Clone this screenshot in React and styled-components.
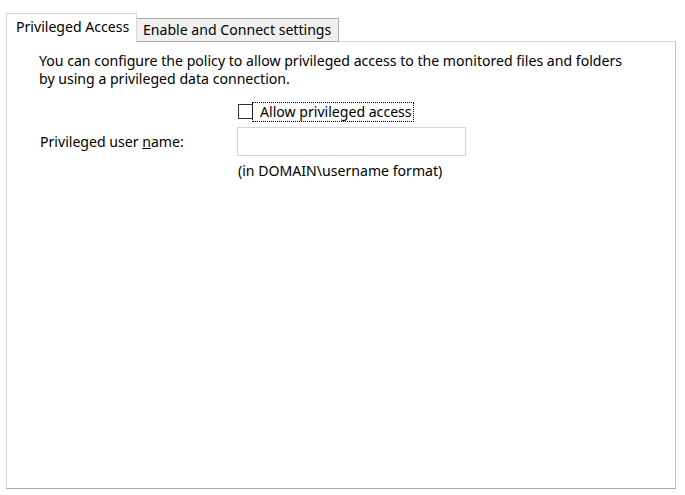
import React from "react";
import styled, { createGlobalStyle } from "styled-components";

const Global = createGlobalStyle`
  html, body { margin: 0; padding: 0; background: #ffffff; }
  body {
    font-family: "Noto Sans", "Open Sans", sans-serif;
    font-size: 14.1px;
    color: #000000;
  }
`;

const Root = styled.div`
  width: 685px;
  height: 495px;
  box-sizing: border-box;
  padding: 13px 9px 6px 6px;
  display: flex;
  flex-direction: column;
`;

const TabStrip = styled.div`
  display: flex;
  align-items: flex-end;
  height: 29px;
  position: relative;
  z-index: 1;
  margin-bottom: -1px;
`;

const Tab = styled.div`
  box-sizing: border-box;
  border: 1px solid ${(p) => (p.$active ? "#d9d9d9" : "#adadad")};
  border-bottom: ${(p) => (p.$active ? "none" : "1px solid #adadad")};
  ${(p) => (p.$active ? "" : "border-left: none;")}
  background: ${(p) => (p.$active ? "#ffffff" : "#f0f0f0")};
  height: ${(p) => (p.$active ? "29px" : "24px")};
  width: ${(p) => p.$w}px;
  padding: ${(p) => (p.$active ? "3px 0 0 9px" : "1px 0 0 6px")};
  white-space: nowrap;
  line-height: 20px;
`;

const Panel = styled.div`
  flex: 1;
  box-sizing: border-box;
  border: 1px solid #d9d9d9;
  border-right-color: #c4c4c4;
  border-bottom-color: #a8a8a8;
  background: #ffffff;
  padding: 10px 0 0 32px;
`;

const Intro = styled.p`
  margin: 0;
  line-height: 18px;
`;

const Form = styled.div`
  display: grid;
  grid-template-columns: 198px 229px;
  grid-template-rows: 19px 29px 18px;
  row-gap: 6px;
  margin-top: 14px;
  align-items: center;
`;

const CheckRow = styled.label`
  grid-column: 2;
  display: flex;
  align-items: center;
`;

const Box = styled.span`
  box-sizing: border-box;
  width: 15px;
  height: 15px;
  border: 1px solid #333333;
  background: #ffffff;
  margin-left: 1px;
`;

const CheckText = styled.span`
  outline: 1px dotted #000000;
  outline-offset: 0;
  padding: 0 1px 0 7px;
  line-height: 18px;
`;

const FieldLabel = styled.span`
  grid-column: 1;
  padding-left: 1px;
`;

const TextInput = styled.div`
  grid-column: 2;
  box-sizing: border-box;
  height: 29px;
  border: 1px solid #d4d4d4;
  background: #ffffff;
`;

const Hint = styled.span`
  grid-column: 2;
  padding-left: 1px;
  line-height: 18px;
`;

export default function App() {
  return (
    <>
      <Global />
      <Root>
        <TabStrip>
          <Tab $active $w={131}>Privileged Access</Tab>
          <Tab $w={202}>Enable and Connect settings</Tab>
        </TabStrip>
        <Panel>
          <Intro>
            You can configure the policy to allow privileged access to the monitored files and folders
            <br />
            by using a privileged data connection.
          </Intro>
          <Form>
            <CheckRow>
              <Box />
              <CheckText>Allow privileged access</CheckText>
            </CheckRow>
            <FieldLabel>
              Privileged user <u>n</u>ame:
            </FieldLabel>
            <TextInput />
            <Hint>(in DOMAIN\username format)</Hint>
          </Form>
        </Panel>
      </Root>
    </>
  );
}
